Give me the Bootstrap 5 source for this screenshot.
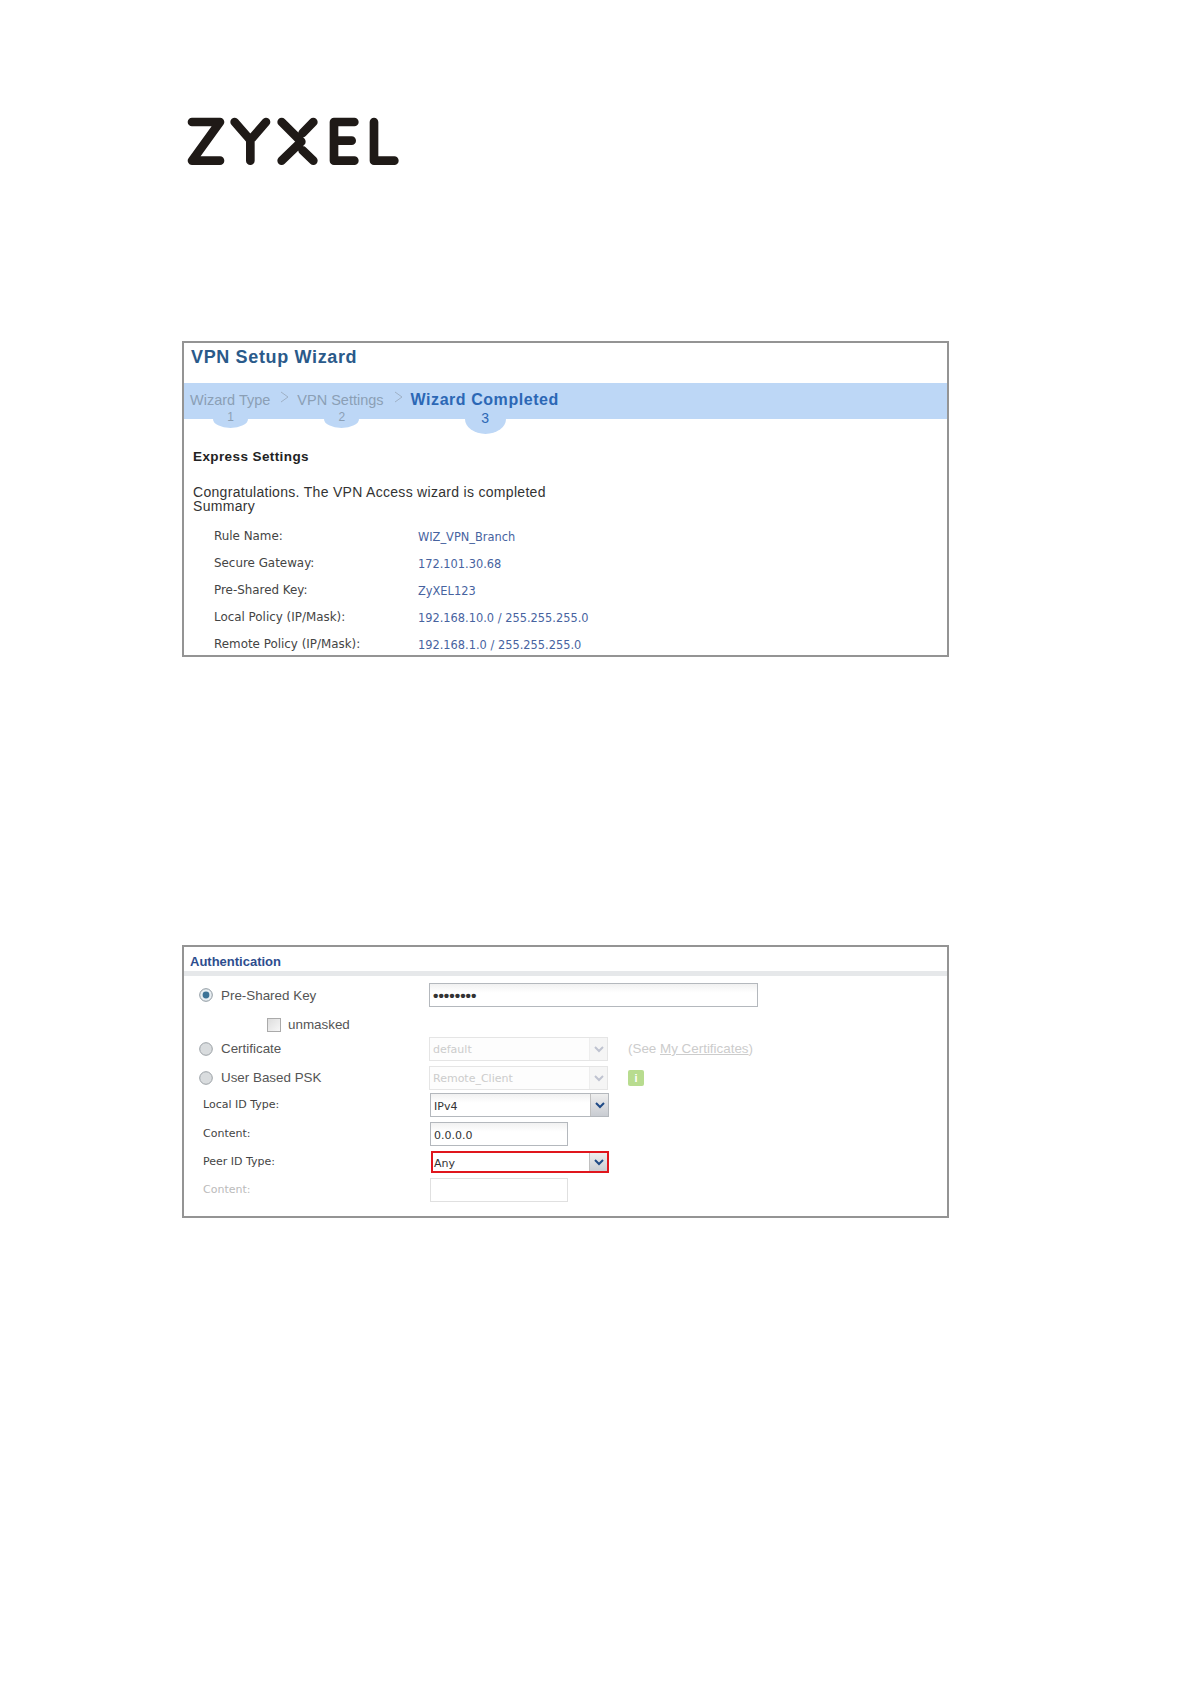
<!DOCTYPE html>
<html lang="en"><head><meta charset="utf-8"><title>VPN Setup Wizard</title>
<link href="https://cdn.jsdelivr.net/npm/bootstrap@5.3.0/dist/css/bootstrap.min.css" rel="stylesheet">
<style>
html,body{background:#fff;margin:0;}
body{font-family:"Liberation Sans",Arial,sans-serif;color:#333;min-height:1684px;}
.sheet{padding:90px 0 0 182px;}
.logo-mark{display:block;margin-left:-12px;width:260px;height:100px;}
.frame{width:767px;border:2px solid #949494;background:#fff;overflow:hidden;}
.frame-a{margin-top:151px;height:316px;}
.frame-b{margin-top:288px;height:273px;}
/* wizard */
.wiz-title{font-size:18px;font-weight:700;color:#2a5a8a;letter-spacing:.65px;line-height:22px;padding:3px 0 0 7px;height:40px;}
.wiz-band{height:36px;background:#bdd7f6;padding-left:6px;position:relative;}
.step{position:relative;font-size:14.5px;color:#8b9fb5;line-height:34px;white-space:nowrap;}
.step-sep{width:9px;height:12px;margin:2px 8px 0 10px;flex:none;}
.step-now{font-size:16px;font-weight:700;color:#2c67b5;letter-spacing:.55px;margin-left:0;}
.bump{position:absolute;top:36px;width:35px;height:9px;background:#bdd7f6;border-radius:0 0 50% 50%/0 0 100% 100%;}
.bump-big{width:41px;height:15px;}
.step-num{position:absolute;top:26px;left:0;width:100%;text-align:center;font-size:12px;line-height:16px;color:#8b9fb5;}
.num-big{top:27px;font-size:14px;font-weight:400;color:#2c67b5;letter-spacing:0;}
.step-a .bump,.step-a .step-num{left:23px;width:35px;}
.step-b .bump,.step-b .step-num{left:27px;width:35px;}
.step-c .bump,.step-c .step-num{left:54px;width:41px;}
.wiz-body{padding:0 0 0 9px;}
.express{font-size:13.5px;font-weight:700;color:#222;letter-spacing:.4px;line-height:18px;margin-top:29px;}
.congrats{font-size:14px;color:#333;line-height:14px;margin-top:19px;letter-spacing:.3px;}
.sum-rows{padding-left:21px;margin-top:10px;}
.sum-row{height:27.2px;}
.sum-key{width:204px;font-family:"DejaVu Sans",sans-serif;font-size:11.9px;color:#444;flex:none;}
.sum-val{font-family:"DejaVu Sans",sans-serif;font-size:11.4px;color:#47639f;padding-top:1px;}
/* auth */
.auth-title{font-size:13px;font-weight:700;color:#2d4d8e;line-height:16px;padding:7px 0 0 6px;height:24px;}
.auth-bar{height:5px;background:#e6e8ea;}
.pick{height:24px;padding-left:15px;}
.pick-dot{width:14px;height:14px;flex:none;}
.pick-lbl{font-size:13.4px;color:#555;margin-left:8px;width:210px;flex:none;padding-top:1px;}
.row-a .pick-lbl{padding-top:3px;}
.row-a{margin-top:7px;}
.row-b{height:24px;padding-left:83px;margin-top:6px;font-size:13.4px;color:#555;}
.tick{width:14px;height:14px;border:1px solid #aaa;background:linear-gradient(135deg,#ddd,#f7f7f7);margin-right:7px;flex:none;}
.row-c{margin-top:0;}
.row-d{margin-top:5px;}
.field-lbl{font-family:"DejaVu Sans",sans-serif;font-size:11px;color:#444;width:246px;padding-left:19px;flex:none;}
.field-off{color:#bbb;}
.box{border:1px solid #b4b8bd;border-radius:0;padding:0 0 0 3px;font-family:"DejaVu Sans",sans-serif;font-size:11px;line-height:25px;height:24px;color:#333;min-height:0;background:linear-gradient(#f1f1f1,#fff 40%);flex:none;}
.box-key{width:329px;font-family:"Liberation Sans",sans-serif;font-weight:700;font-size:15.5px;line-height:24px;margin-left:-2px;}
.box-text{width:138px;}
.box-sel{width:179px;display:flex;justify-content:space-between;padding-right:0;}
.box-muted{border-color:#e5e5e5;background:#fdfdfd;color:#ccc;width:179px;margin-left:-2px;line-height:24px;}
.box-blank{border-color:#e0e0e0;background:#fff;}
.box-alert{border:2px solid #e0161d;width:178px;height:22px;line-height:21px;margin-left:1px;padding-left:1px;background:#fff;}
.caret-cell{width:18px;height:100%;flex:none;background:linear-gradient(#eee,#c9ccd2);border-left:1px solid #c0c0c0;display:flex;align-items:center;justify-content:center;}
.caret-soft{background:#f5f5f5;border-left-color:#eee;}
.ln-l{height:24px;margin-top:3px;}
.ln-s{height:24px;margin-top:5px;}
.ln-t{height:22px;margin-top:5px;}
.ln-u{height:24px;margin-top:5px;}
.see{font-size:13.4px;color:#ccc;margin-left:20px;white-space:nowrap;}
.see u{text-decoration:underline;}
.note{width:16px;height:16px;margin-left:20px;border-radius:2px;background:#b8dc8f;color:#fff;font-size:11px;font-weight:700;line-height:16px;text-align:center;flex:none;}
</style></head>
<body>
<main class="sheet">
<svg class="logo-mark" viewBox="0 0 780 300" role="img" aria-label="Zyxel logo" fill="none" stroke="#1f1a17" stroke-width="26" stroke-linecap="round" stroke-linejoin="round">
<path d="M66 96H150L66 212H150"/>
<path d="M194 96L241 150L288 96M241 150V212"/>
<path d="M335 96L394 155L335 212M430 96L398 129M398 181L430 212"/>
<path d="M553 96H492V212H553M492 152H545"/>
<path d="M612 96V212H673"/>
</svg>

<section class="frame frame-a">
 <div class="wiz-title">VPN Setup Wizard</div>
 <div class="wiz-band d-flex align-items-start">
  <div class="step step-a">Wizard Type<span class="bump"></span><span class="step-num">1</span></div>
  <svg class="step-sep mt-2" viewBox="0 0 9 12" fill="none" stroke="#9fb1c6"><path d="M1 1L8 6L1 11"/></svg>
  <div class="step step-b">VPN Settings<span class="bump"></span><span class="step-num">2</span></div>
  <svg class="step-sep mt-2" viewBox="0 0 9 12" fill="none" stroke="#9fb1c6"><path d="M1 1L8 6L1 11"/></svg>
  <div class="step step-now step-c">Wizard Completed<span class="bump bump-big"></span><span class="step-num num-big">3</span></div>
 </div>
 <div class="wiz-body">
  <div class="express">Express Settings</div>
  <div class="congrats">Congratulations. The VPN Access wizard is completed<br>Summary</div>
  <div class="sum-rows">
   <div class="sum-row d-flex align-items-center"><div class="sum-key">Rule Name:</div><div class="sum-val">WIZ_VPN_Branch</div></div>
   <div class="sum-row d-flex align-items-center"><div class="sum-key">Secure Gateway:</div><div class="sum-val">172.101.30.68</div></div>
   <div class="sum-row d-flex align-items-center"><div class="sum-key">Pre-Shared Key:</div><div class="sum-val">ZyXEL123</div></div>
   <div class="sum-row d-flex align-items-center"><div class="sum-key">Local Policy (IP/Mask):</div><div class="sum-val">192.168.10.0 / 255.255.255.0</div></div>
   <div class="sum-row d-flex align-items-center"><div class="sum-key">Remote Policy (IP/Mask):</div><div class="sum-val">192.168.1.0 / 255.255.255.0</div></div>
  </div>
 </div>
</section>

<section class="frame frame-b">
 <div class="auth-title">Authentication</div>
 <div class="auth-bar"></div>
 <div class="pick row-a d-flex align-items-center">
  <svg class="pick-dot" viewBox="0 0 14 14"><circle cx="7" cy="7" r="6.3" fill="#e8eef2" stroke="#8d979f"/><circle cx="7" cy="7" r="3.4" fill="#3b7296"/></svg>
  <div class="pick-lbl">Pre-Shared Key</div>
  <div class="box form-control box-key">••••••••</div>
 </div>
 <div class="row-b d-flex align-items-center"><span class="tick"></span>unmasked</div>
 <div class="pick row-c d-flex align-items-center">
  <svg class="pick-dot" viewBox="0 0 14 14"><circle cx="7" cy="7" r="6.3" fill="#d9dcde" stroke="#9aa0a5"/></svg>
  <div class="pick-lbl">Certificate</div>
  <div class="box form-control box-sel box-muted"><span>default</span><span class="caret-cell caret-soft"><svg width="10" height="7" viewBox="0 0 10 7" fill="none" stroke="#bfc3d0" stroke-width="2"><path d="M1 1L5 5L9 1"/></svg></span></div>
  <div class="see">(See <u>My Certificates</u>)</div>
 </div>
 <div class="pick row-d d-flex align-items-center">
  <svg class="pick-dot" viewBox="0 0 14 14"><circle cx="7" cy="7" r="6.3" fill="#d9dcde" stroke="#9aa0a5"/></svg>
  <div class="pick-lbl">User Based PSK</div>
  <div class="box form-control box-sel box-muted"><span>Remote_Client</span><span class="caret-cell caret-soft"><svg width="10" height="7" viewBox="0 0 10 7" fill="none" stroke="#bfc3d0" stroke-width="2"><path d="M1 1L5 5L9 1"/></svg></span></div>
  <div class="note">i</div>
 </div>
 <div class="ln-l d-flex align-items-center">
  <div class="field-lbl">Local ID Type:</div>
  <div class="box form-control box-sel"><span>IPv4</span><span class="caret-cell"><svg width="10" height="7" viewBox="0 0 10 7" fill="none" stroke="#1f4a86" stroke-width="2"><path d="M1 1L5 5L9 1"/></svg></span></div>
 </div>
 <div class="ln-s d-flex align-items-center">
  <div class="field-lbl">Content:</div>
  <div class="box form-control box-text">0.0.0.0</div>
 </div>
 <div class="ln-t d-flex align-items-center">
  <div class="field-lbl">Peer ID Type:</div>
  <div class="box form-control box-sel box-alert"><span>Any</span><span class="caret-cell"><svg width="10" height="7" viewBox="0 0 10 7" fill="none" stroke="#1f4a86" stroke-width="2"><path d="M1 1L5 5L9 1"/></svg></span></div>
 </div>
 <div class="ln-u d-flex align-items-center">
  <div class="field-lbl field-off">Content:</div>
  <div class="box form-control box-text box-blank"></div>
 </div>
</section>
</main>
<script src="https://cdn.jsdelivr.net/npm/bootstrap@5.3.0/dist/js/bootstrap.bundle.min.js"></script>
</body></html>
